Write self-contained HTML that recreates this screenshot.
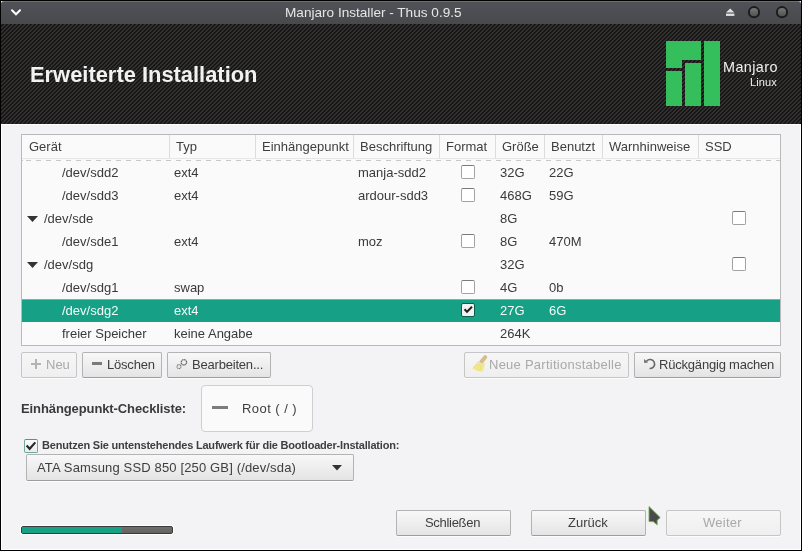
<!DOCTYPE html>
<html><head><meta charset="utf-8">
<style>
*{box-sizing:border-box;margin:0;padding:0}
html,body{width:802px;height:551px;overflow:hidden;background:#000}
body{font-family:"Liberation Sans",sans-serif;position:relative}
.a{position:absolute}
.t{position:absolute;will-change:transform;white-space:nowrap;line-height:13px;font-size:13px;color:#3e3e3e}
#win{position:absolute;left:1px;top:1px;width:800px;height:549px;background:#f3f3f5}
#tb{position:absolute;left:1px;top:1px;width:800px;height:23px;background:linear-gradient(#505257,#47494d);border-radius:3px 3px 0 0;border-top:1px solid #6c6e73}
#hdr{position:absolute;left:1px;top:24px;width:800px;height:100px}
#content{position:absolute;left:1px;top:124px;width:800px;height:426px;background:#f3f3f5;border:1px solid #fff;border-top:1px solid #fff}
.tbl{position:absolute;left:21px;top:134px;width:760px;height:212px;border:1px solid #b9b9b9;background:#fafafa}
.sep{position:absolute;top:135px;width:1px;height:24px;background:#dcdcdc}
.dash{position:absolute;left:22px;top:160px;width:758px;height:1px;background:repeating-linear-gradient(90deg,#c8c8c8 0 5px,transparent 5px 10px);background-position:4px 0}
.cb{position:absolute;width:14px;height:14px;border:1px solid #a2a2a2;border-top-color:#7a7a7a;border-radius:2px;background:#fff}
.cb.sel{border-color:#0b5e4c;background:#f2f2f2}
.btn{position:absolute;height:26px;border:1px solid #b3b3b3;border-bottom-color:#9c9c9c;border-radius:2px;background:linear-gradient(#f8f8f8,#e4e4e4);box-shadow:0 1px 0 rgba(255,255,255,.8)}
.btn.dis{background:linear-gradient(#f6f6f6,#efefef);border-color:#c6c6c6}
</style></head><body>
<div id="win"></div>
<div id="tb"></div>
<!-- chevron -->
<svg class="a" style="left:0;top:0" width="40" height="24"><path d="M12 10.3 L16 14.3 L20 10.3" stroke="#fff" stroke-width="2" fill="none" stroke-linecap="round"/></svg>
<div class="t" style="left:285px;top:5.5px;font-size:13.6px;color:#e6e6e6">Manjaro Installer - Thus 0.9.5</div>
<!-- eject -->
<svg class="a" style="left:720px;top:0" width="82" height="24">
<path d="M6 12.5 L10.2 8.5 L14.4 12.5 Z" fill="#e2e2e2"/>
<rect x="6" y="13.6" width="8.4" height="2.3" fill="#e2e2e2"/>
<defs><linearGradient id="cg" x1="0" y1="0" x2="0" y2="1"><stop offset="0" stop-color="#7a7a7a"/><stop offset="1" stop-color="#4e4e4e"/></linearGradient></defs>
<circle cx="34" cy="12.2" r="5.1" fill="url(#cg)" stroke="#1c1c1c" stroke-width="2"/>
<circle cx="62" cy="12.2" r="5.1" fill="url(#cg)" stroke="#1c1c1c" stroke-width="2"/>
</svg>
<!-- header stripes -->
<svg id="hdr" width="800" height="100">
<defs><pattern id="st" x="-1" width="4" height="4" patternUnits="userSpaceOnUse">
<rect width="4" height="4" fill="#161616"/>
<rect x="0" y="0" width="1" height="1" fill="#323130"/><rect x="1" y="0" width="1" height="1" fill="#323130"/><rect x="0" y="1" width="1" height="1" fill="#323130"/><rect x="3" y="1" width="1" height="1" fill="#323130"/><rect x="2" y="2" width="1" height="1" fill="#323130"/><rect x="3" y="2" width="1" height="1" fill="#323130"/><rect x="1" y="3" width="1" height="1" fill="#323130"/><rect x="2" y="3" width="1" height="1" fill="#323130"/>
</pattern></defs>
<rect width="800" height="100" fill="url(#st)" shape-rendering="crispEdges"/>
</svg>
<div class="t" style="left:29.5px;top:63.5px;font-size:21.9px;line-height:21px;font-weight:bold;color:#f2f2f2;letter-spacing:0px">Erweiterte Installation</div>
<!-- logo -->
<svg class="a" style="left:666px;top:41px" width="54" height="65">
<g fill="#35bf5c">
<path d="M0 0 H35 V19 H16 V27 H0 Z"/>
<rect x="0" y="30" width="16" height="35"/>
<rect x="19" y="22" width="16" height="43"/>
<rect x="38" y="0" width="16" height="65"/>
</g></svg>
<div class="t" style="left:723px;top:61px;font-size:14.4px;letter-spacing:.4px;color:#f0f0f0">Manjaro</div>
<div class="t" style="left:749.5px;top:75.5px;font-size:11px;letter-spacing:.1px;color:#f0f0f0">Linux</div>

<div id="content"></div>
<div class="tbl"></div>
<!--TABLE-->
<div class="sep" style="left:169px"></div>
<div class="sep" style="left:255px"></div>
<div class="sep" style="left:353px"></div>
<div class="sep" style="left:439px"></div>
<div class="sep" style="left:495px"></div>
<div class="sep" style="left:544px"></div>
<div class="sep" style="left:602px"></div>
<div class="sep" style="left:698px"></div>
<div class="t" style="left:29px;top:139.5px">Gerät</div>
<div class="t" style="left:176px;top:139.5px">Typ</div>
<div class="t" style="left:262px;top:139.5px">Einhängepunkt</div>
<div class="t" style="left:360px;top:139.5px">Beschriftung</div>
<div class="t" style="left:446px;top:139.5px">Format</div>
<div class="t" style="left:502px;top:139.5px">Größe</div>
<div class="t" style="left:551px;top:139.5px">Benutzt</div>
<div class="t" style="left:609px;top:139.5px">Warnhinweise</div>
<div class="t" style="left:705px;top:139.5px">SSD</div>
<div class="a" style="left:22px;top:158px;width:758px;height:1px;background:#e6e6e6"></div>
<div class="dash"></div>
<div class="t" style="left:62px;top:166px;color:#3a3a3a">/dev/sdd2</div>
<div class="t" style="left:174px;top:166px;color:#3a3a3a">ext4</div>
<div class="t" style="left:358px;top:166px;color:#3a3a3a">manja-sdd2</div>
<div class="cb" style="left:461px;top:165px"></div>
<div class="t" style="left:500px;top:166px;color:#3a3a3a">32G</div>
<div class="t" style="left:549px;top:166px;color:#3a3a3a">22G</div>
<div class="t" style="left:62px;top:189px;color:#3a3a3a">/dev/sdd3</div>
<div class="t" style="left:174px;top:189px;color:#3a3a3a">ext4</div>
<div class="t" style="left:358px;top:189px;color:#3a3a3a">ardour-sdd3</div>
<div class="cb" style="left:461px;top:188px"></div>
<div class="t" style="left:500px;top:189px;color:#3a3a3a">468G</div>
<div class="t" style="left:549px;top:189px;color:#3a3a3a">59G</div>
<svg class="a" style="left:27px;top:216px" width="11" height="6"><path d="M0 0H11L5.5 6Z" fill="#333"/></svg>
<div class="t" style="left:44px;top:212px;color:#3a3a3a">/dev/sde</div>
<div class="t" style="left:500px;top:212px;color:#3a3a3a">8G</div>
<div class="cb" style="left:732px;top:211px"></div>
<div class="t" style="left:62px;top:235px;color:#3a3a3a">/dev/sde1</div>
<div class="t" style="left:174px;top:235px;color:#3a3a3a">ext4</div>
<div class="t" style="left:358px;top:235px;color:#3a3a3a">moz</div>
<div class="cb" style="left:461px;top:234px"></div>
<div class="t" style="left:500px;top:235px;color:#3a3a3a">8G</div>
<div class="t" style="left:549px;top:235px;color:#3a3a3a">470M</div>
<svg class="a" style="left:27px;top:262px" width="11" height="6"><path d="M0 0H11L5.5 6Z" fill="#333"/></svg>
<div class="t" style="left:44px;top:258px;color:#3a3a3a">/dev/sdg</div>
<div class="t" style="left:500px;top:258px;color:#3a3a3a">32G</div>
<div class="cb" style="left:732px;top:257px"></div>
<div class="t" style="left:62px;top:281px;color:#3a3a3a">/dev/sdg1</div>
<div class="t" style="left:174px;top:281px;color:#3a3a3a">swap</div>
<div class="cb" style="left:461px;top:280px"></div>
<div class="t" style="left:500px;top:281px;color:#3a3a3a">4G</div>
<div class="t" style="left:549px;top:281px;color:#3a3a3a">0b</div>
<div class="a" style="left:22px;top:299px;width:758px;height:23px;background:#16a085;border-top:1px solid #3fd0ad"></div>
<div class="t" style="left:62px;top:304px;color:#f4fbf9">/dev/sdg2</div>
<div class="t" style="left:174px;top:304px;color:#f4fbf9">ext4</div>
<div class="cb sel" style="left:461px;top:303px"><svg width="12" height="12" style="position:absolute;left:0;top:0"><path d="M2.5 5.3 L5 7.8 L10 2.8" stroke="#222" stroke-width="2" fill="none"/></svg></div>
<div class="t" style="left:500px;top:304px;color:#f4fbf9">27G</div>
<div class="t" style="left:549px;top:304px;color:#f4fbf9">6G</div>
<div class="t" style="left:62px;top:327px;color:#3a3a3a">freier Speicher</div>
<div class="t" style="left:174px;top:327px;color:#3a3a3a">keine Angabe</div>
<div class="t" style="left:500px;top:327px;color:#3a3a3a">264K</div>
<!--/TABLE-->

<!-- buttons row -->
<div class="btn dis" style="left:21px;top:352px;width:56px"></div>
<svg class="a" style="left:30px;top:359px" width="12" height="11"><path d="M6 0V10M1 5H11" stroke="#b3b3b3" stroke-width="2"/></svg>
<div class="t" style="left:46px;top:358px;color:#a9a9a9">Neu</div>
<div class="btn" style="left:82px;top:352px;width:80px"></div>
<div class="a" style="left:92px;top:362px;width:10px;height:3px;background:#7a7a7a"></div>
<div class="t" style="left:107px;top:358px;letter-spacing:-.2px">Löschen</div>
<div class="btn" style="left:167px;top:352px;width:104px"></div>
<svg class="a" style="left:172px;top:355px" width="20" height="18"><circle cx="11.9" cy="7.4" r="2.7" fill="none" stroke="#6a6a6a" stroke-width="1.3" stroke-dasharray="1.6 .5"/><circle cx="7" cy="11.6" r="2" fill="none" stroke="#7a7a7a" stroke-width="1.1" stroke-dasharray="1.2 .4"/></svg>
<div class="t" style="left:192px;top:358px;letter-spacing:-.2px">Bearbeiten...</div>
<div class="btn dis" style="left:464px;top:352px;width:165px"></div>
<svg class="a" style="left:468px;top:353px" width="22" height="24"><path d="M10.5 7.8 L17.3 10.6 L14.6 19 Q9 18.5 4 15.6 Z" fill="#f1e88f"/><path d="M6 15 L11 9.5 M8.5 16.8 L12.5 10.5 M11.5 18 L14 11" stroke="#e3d772" stroke-width=".6"/><path d="M17.2 4.2 L13.6 8.6" stroke="#d6bd8a" stroke-width="4" stroke-linecap="round"/><path d="M10.3 9.6 L16 11.8" stroke="#e9e1f0" stroke-width="1.1"/></svg>
<div class="t" style="left:489px;top:358px;color:#a9a9a9;letter-spacing:.25px">Neue Partitionstabelle</div>
<div class="btn" style="left:634px;top:352px;width:147px"></div>
<svg class="a" style="left:638px;top:354px" width="22" height="22"><path d="M8.6 7.2 A4.5 4.5 0 1 1 11.6 14.5" fill="none" stroke="#666" stroke-width="1.6"/><path d="M6.1 4.9 V8.8 H10 Z" fill="#666"/></svg>
<div class="t" style="left:659px;top:358px;letter-spacing:-.2px">Rückgängig machen</div>

<div class="t" style="left:21px;top:402px;font-weight:bold;letter-spacing:-.1px;color:#3a3a3a">Einhängepunkt-Checkliste:</div>
<div class="a" style="left:201px;top:385px;width:112px;height:47px;border:1px solid #cfcfcf;border-radius:4px;background:#fafafa"></div>
<div class="a" style="left:212px;top:406px;width:16px;height:3px;background:#7c7c7c"></div>
<div class="t" style="left:242px;top:402px;letter-spacing:.45px">Root ( / )</div>

<div class="cb" style="left:24px;top:439px;border-color:#5e8f83 #6ea99b #6ea99b;background:linear-gradient(#fbfbfb,#ececec)"><svg width="12" height="12" style="position:absolute;left:0;top:0"><path d="M1.6 5.4 L4.7 8.8 L10.3 2.4" stroke="#2a2a2a" stroke-width="2.2" fill="none"/></svg></div>
<div class="t" style="left:42px;top:440px;font-size:11px;line-height:11px;font-weight:bold;letter-spacing:-.2px">Benutzen Sie untenstehendes Laufwerk für die Bootloader-Installation:</div>
<div class="btn" style="left:26px;top:454px;width:328px;height:27px"></div>
<div class="t" style="left:37px;top:461px;letter-spacing:.15px">ATA Samsung SSD 850 [250 GB] (/dev/sda)</div>
<svg class="a" style="left:332px;top:465px" width="10" height="6"><path d="M0 0H10L5 5.5Z" fill="#333"/></svg>

<div class="a" style="left:21px;top:526px;width:152px;height:8px;border:1px solid #3a3a3a;border-radius:2px;background:linear-gradient(#6e6f6d,#636462);box-shadow:0 0 0 1px #fff"></div>
<div class="a" style="left:22px;top:527px;width:100px;height:6px;background:#17a185"></div>

<div class="btn" style="left:396px;top:510px;width:115px"></div>
<div class="t" style="left:425px;top:516px;letter-spacing:-.3px">Schließen</div>
<div class="btn" style="left:531px;top:510px;width:115px"></div>
<div class="t" style="left:568px;top:516px">Zurück</div>
<div class="btn dis" style="left:666px;top:510px;width:115px"></div>
<div class="t" style="left:703px;top:516px;color:#a9a9a9;letter-spacing:.25px">Weiter</div>
<svg class="a" style="left:640px;top:500px" width="28" height="30"><path d="M9 6.5 L20.2 17.6 L17.2 20.3 L17.2 24.8 L13.2 21.6 L9 21.6 Z" fill="#4a4a4a" stroke="#72b34e" stroke-width=".9" stroke-linejoin="miter"/></svg>
</body></html>
